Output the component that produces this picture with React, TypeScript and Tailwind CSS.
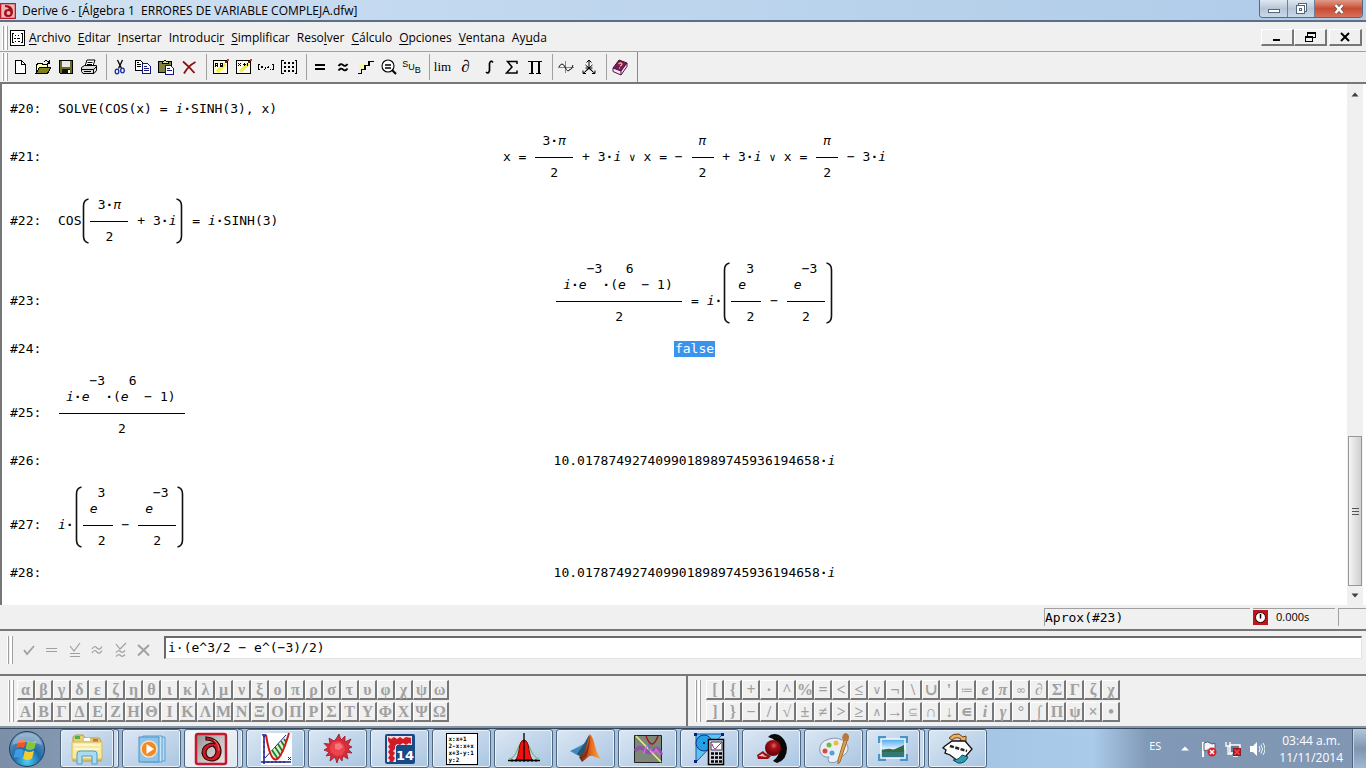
import React, { ReactNode } from "react";

const MONO = "font-['DejaVu_Sans_Mono','Liberation_Mono',monospace]";
const UI = "font-['Open_Sans','Noto_Sans',sans-serif]";

/* ---------- formula building blocks ---------- */

function I({ children }: { children: ReactNode }) {
  return <i className="italic">{children}</i>;
}

function Line({ children }: { children: ReactNode }) {
  return <span className="block h-4 whitespace-pre">{children}</span>;
}

/* Text that sits on the level of a fraction bar. */
function Axis({ children }: { children: ReactNode }) {
  return <span className="mb-4 block h-4 whitespace-pre">{children}</span>;
}

function Frac({ num, den, skew, width }: { num: ReactNode; den: ReactNode; skew?: boolean; width: string }) {
  return (
    <span className={`flex flex-col ${width}`}>
      <span className="px-2 text-center">{num}</span>
      <span className="flex h-4 items-center px-px">
        <span className="h-px flex-1 bg-black" />
      </span>
      <span className={skew ? "h-4 pr-2 text-right" : "h-4 text-center"}>{den}</span>
    </span>
  );
}

function Power({ base, exp }: { base: ReactNode; exp: string }) {
  return (
    <span className="flex items-end">
      <Line>{base}</Line>
      <span className="mb-4 block h-4">{exp}</span>
    </span>
  );
}

function Paren({ tall, right }: { tall?: boolean; right?: boolean }) {
  const h = tall ? 64 : 48;
  const d = right
    ? `M0.5 2 Q5.5 3 5.5 9 V${h - 9} Q5.5 ${h - 3} 0.5 ${h - 2}`
    : `M7.5 2 Q2.5 3 2.5 9 V${h - 9} Q2.5 ${h - 3} 7.5 ${h - 2}`;
  return (
    <svg width="8" height={h} viewBox={`0 0 8 ${h}`} fill="none" stroke="#111" strokeWidth="1.6" aria-hidden="true">
      <path d={d} />
    </svg>
  );
}

const i = <I>i</I>;
const e = <I>e</I>;
const pi = <I>π</I>;
const dot = <b className="font-bold">·</b>;
const or = <span className="text-[11px]">∨</span>;

const expProduct = (
  <Frac
    width="w-32"
    num={
      <span className="flex items-end">
        <Line>
          {i}
          {dot}
        </Line>
        <Power base={e} exp="−3" />
        <Line>{dot}(</Line>
        <Power base={e} exp="6" />
        <Line> − 1)</Line>
      </span>
    }
    den="2"
  />
);

const expDifference = (
  <>
    <Axis>
      {i}
      {dot}
    </Axis>
    <Paren tall />
    <Frac width="w-8" num={<Power base={e} exp="3" />} den="2" skew />
    <Axis> − </Axis>
    <Frac width="w-10" num={<Power base={e} exp="−3" />} den="2" />
    <Paren tall right />
  </>
);

const number = (
  <Line>
    10.0178749274099018989745936194658{dot}
    {i}
  </Line>
);

const steps: { n: number; center?: boolean; deep?: boolean; body: ReactNode }[] = [
  {
    n: 20,
    body: (
      <Line>
        SOLVE(COS(x) = {i}
        {dot}SINH(3), x)
      </Line>
    ),
  },
  {
    n: 21,
    center: true,
    deep: true,
    body: (
      <>
        <Axis>x = </Axis>
        <Frac width="w-10" num={<>3{dot}{pi}</>} den="2" />
        <Axis> + 3{dot}{i} {or} x = − </Axis>
        <Frac width="w-6" num={pi} den="2" />
        <Axis> + 3{dot}{i} {or} x = </Axis>
        <Frac width="w-6" num={pi} den="2" />
        <Axis> − 3{dot}{i}</Axis>
      </>
    ),
  },
  {
    n: 22,
    deep: true,
    body: (
      <>
        <Axis>COS</Axis>
        <Paren />
        <Frac width="w-10" num={<>3{dot}{pi}</>} den="2" />
        <Axis> + 3{dot}{i}</Axis>
        <Paren right />
        <Axis> = {i}{dot}SINH(3)</Axis>
      </>
    ),
  },
  {
    n: 23,
    center: true,
    deep: true,
    body: (
      <>
        {expProduct}
        <Axis> = </Axis>
        {expDifference}
      </>
    ),
  },
  { n: 24, center: true, body: <span className="block h-4 bg-[#3a94ee] px-px text-white">false</span> },
  { n: 25, deep: true, body: expProduct },
  { n: 26, center: true, body: number },
  { n: 27, deep: true, body: expDifference },
  { n: 28, center: true, body: number },
];

/* ---------- small chrome pieces ---------- */

function Grip({ className = "" }: { className?: string }) {
  return (
    <span className={`flex w-[6px] gap-px ${className}`}>
      <span className="w-[2px] border-r border-[#a0a0a0] bg-white" />
      <span className="w-[3px] border-r border-[#a0a0a0] bg-white" />
    </span>
  );
}

function Svg({ s = 18, children, crisp = true }: { s?: number; children: ReactNode; crisp?: boolean }) {
  return (
    <svg
      width={s}
      height={s}
      viewBox={`0 0 ${s} ${s}`}
      fill="none"
      shapeRendering={crisp ? "crispEdges" : "auto"}
      aria-hidden="true"
    >
      {children}
    </svg>
  );
}

const menus: [string, string, string][] = [
  ["", "A", "rchivo"],
  ["", "E", "ditar"],
  ["", "I", "nsertar"],
  ["Introduci", "r", ""],
  ["", "S", "implificar"],
  ["Reso", "l", "ver"],
  ["", "C", "álculo"],
  ["", "O", "pciones"],
  ["", "V", "entana"],
  ["Ay", "u", "da"],
];

const tools: { label: string; icon: ReactNode }[][] = [
  [
    {
      label: "Nuevo",
      icon: (
        <Svg>
          <path d="M4.5 2.5h6l4 4v9h-10z" fill="#fff" stroke="#000" />
          <path d="M10.5 2.5v4h4" stroke="#000" />
        </Svg>
      ),
    },
    {
      label: "Abrir",
      icon: (
        <Svg>
          <path d="M2 15V6h1.500l1-1h3l1 1h5v3" fill="#ffffb0" stroke="#000" />
          <path d="M2 15.500l3.500-6.500H17l-3.500 6.500z" fill="#808020" stroke="#000" />
          <path d="M10 3.500q3-2 5 1M15.500 2v3h-3" stroke="#000" />
        </Svg>
      ),
    },
    {
      label: "Guardar",
      icon: (
        <Svg>
          <path d="M2.500 2.500h13v13h-12l-1-1z" fill="#6d6d20" stroke="#000" />
          <path d="M5 3h8v6H5z" fill="#e8e8e8" />
          <path d="M5 11h8v4.500H5z" fill="#111" />
          <path d="M11 12h1.500v3H11z" fill="#fff" />
        </Svg>
      ),
    },
    {
      label: "Imprimir",
      icon: (
        <Svg crisp={false}>
          <path d="M5 8l2-6h8l-2 6" fill="#fff" stroke="#000" />
          <path d="M7.500 4.500h5M7 6.500h5" stroke="#000" />
          <path d="M1.500 9.500l3-2h12v5l-2.500 3h-11l-1.500-2z" fill="#ddd" stroke="#000" />
          <path d="M2 11.500h11.500l3-3M13.500 11.500v4M4 13.500h7" stroke="#000" />
        </Svg>
      ),
    },
  ],
  [
    {
      label: "Cortar",
      icon: (
        <Svg crisp={false}>
          <path d="M6.500 2l4 8.500M11.500 2l-4 8.500" stroke="#000" strokeWidth="1.300" />
          <ellipse cx="6" cy="13.500" rx="1.800" ry="2.300" stroke="#1a2e9e" strokeWidth="1.300" />
          <ellipse cx="11.500" cy="12.500" rx="1.800" ry="2.300" stroke="#1a2e9e" strokeWidth="1.300" />
        </Svg>
      ),
    },
    {
      label: "Copiar",
      icon: (
        <Svg>
          <path d="M1.500 2.500h5l3 3v7h-8z" fill="#fff" stroke="#000" />
          <path d="M3 6.500h4M3 8.500h4M3 4.500h2" stroke="#000" />
          <path d="M8.500 5.500h5l3 3v7h-8z" fill="#fff" stroke="#15157e" />
          <path d="M10 8.500h3M10 10.500h5M10 12.500h5" stroke="#15157e" />
        </Svg>
      ),
    },
    {
      label: "Pegar",
      icon: (
        <Svg>
          <path d="M1.500 3.500h13v11h-13z" fill="#808040" stroke="#000" />
          <path d="M5 5.500V3.500h1.500l1-1.500h1l1 1.500H11v2z" fill="#e8e880" stroke="#000" />
          <path d="M8.500 7.500h5l3 3v5.500h-8z" fill="#fff" stroke="#15157e" />
          <path d="M10 10.500h3M10 12.500h5" stroke="#15157e" />
        </Svg>
      ),
    },
    {
      label: "Eliminar",
      icon: (
        <Svg crisp={false}>
          <path d="M3 3.500q6 5 11.500 11.500M15.500 4Q8 8 4 15.500" stroke="#8b1212" strokeWidth="1.800" />
        </Svg>
      ),
    },
  ],
  [
    {
      label: "Insertar texto",
      icon: (
        <Svg>
          <path d="M2.500 2.500h14v13h-14z" fill="#fffde8" stroke="#000" />
          <path d="M6 14l8-8" stroke="#f0ee50" strokeWidth="3.500" />
          <path d="M4.500 9V5.500h2V9M4.500 7.500h2M9.500 9V5.500h2v1.500h-2h2v1.500h-2" stroke="#000" />
          <path d="M13.500 3h2v2h-2z" fill="#7a1f10" />
          <path d="M16 1h2v2h-2z" fill="#c8401c" />
        </Svg>
      ),
    },
    {
      label: "Insertar expresión",
      icon: (
        <Svg>
          <path d="M2.500 2.500h14v13h-14z" fill="#fffde8" stroke="#000" />
          <path d="M6 14l8-8" stroke="#f0ee50" strokeWidth="3.500" />
          <path d="M4 5l3 3M7 5L4 8M8.500 6.500h3M10 5v3M13.500 5v3" stroke="#000" />
          <path d="M13.500 3h2v2h-2z" fill="#7a1f10" />
          <path d="M16 1h2v2h-2z" fill="#c8401c" />
        </Svg>
      ),
    },
    {
      label: "Insertar vector",
      icon: (
        <Svg>
          <path d="M3 6.500H1.500v5H3M15 6.500h1.500v5H15M4 7.500v1.500M4 9.500h2M5.500 8v2M7.500 11v1M8.500 9v2M10 9.500h1.500M11.500 8v2M13.500 11v1" stroke="#000" />
        </Svg>
      ),
    },
    {
      label: "Insertar matriz",
      icon: (
        <Svg>
          <path d="M3.500 2.500h-2v13h2M14.500 2.500h2v13h-2" stroke="#000" />
          <path d="M4 5h2M8 5h2M12 5h2M4 9h2M8 9h2M12 9h2M4 13h2M8 13h2M12 13h2" stroke="#000" strokeWidth="2" />
        </Svg>
      ),
    },
  ],
  [
    {
      label: "Simplificar",
      icon: (
        <Svg>
          <path d="M4 7h10M4 11h10" stroke="#000" strokeWidth="2" />
        </Svg>
      ),
    },
    {
      label: "Aproximar",
      icon: (
        <Svg crisp={false}>
          <path d="M4.500 8q2-3 4.500-1t4.500-1M4.500 12.500q2-3 4.500-1t4.500-1" stroke="#000" strokeWidth="1.800" />
        </Svg>
      ),
    },
    {
      label: "Paso a paso",
      icon: (
        <Svg>
          <path d="M2 5h6v6H2z" fill="#f6f6a8" />
          <path d="M1 15.500h3.500v-4H8v-4h4v-4h5" stroke="#000" strokeWidth="1.500" />
        </Svg>
      ),
    },
    {
      label: "Evaluar",
      icon: (
        <Svg crisp={false}>
          <circle cx="8" cy="8" r="6" fill="#fff" stroke="#000" strokeWidth="1.100" />
          <path d="M5 7h6M5 10h6" stroke="#000" strokeWidth="1.700" />
          <path d="M12 12l4 4" stroke="#000" strokeWidth="2.200" />
        </Svg>
      ),
    },
    {
      label: "Sustituir",
      icon: (
        <span className="flex items-center font-['Liberation_Sans',sans-serif] text-[9px] leading-none">
          <span className="mb-[6px]">S</span>
          <span>U</span>
          <span className="mt-[6px]">B</span>
        </span>
      ),
    },
  ],
  [
    { label: "Límite", icon: <span className="font-['Liberation_Serif',serif] text-[13px]">lim</span> },
    { label: "Derivada", icon: <span className="font-['Liberation_Serif','DejaVu_Serif',serif] text-[17px] italic">∂</span> },
    {
      label: "Integral",
      icon: (
        <Svg crisp={false}>
          <path d="M13 4.500q-2.500-3-3.500 1v7q-1 4-3.500 1.500" stroke="#000" strokeWidth="1.700" />
        </Svg>
      ),
    },
    {
      label: "Sumatorio",
      icon: (
        <Svg crisp={false}>
          <path d="M14 6V3.500H4.500L9 9l-5.500 6H14V12.500" stroke="#000" strokeWidth="1.500" />
        </Svg>
      ),
    },
    {
      label: "Producto",
      icon: (
        <Svg>
          <path d="M2 3.500h14M3 15.500h5M10 15.500h5" stroke="#000" />
          <path d="M5.500 4v11M12.500 4v11" stroke="#000" strokeWidth="2" />
        </Svg>
      ),
    },
  ],
  [
    {
      label: "Ventana 2D",
      icon: (
        <Svg crisp={false}>
          <path d="M1 9.500h16M8.500 3v12" stroke="#888" />
          <path d="M2 9q3-6 6 0t4 3q3 0 4-5" stroke="#111" />
        </Svg>
      ),
    },
    {
      label: "Ventana 3D",
      icon: (
        <Svg crisp={false}>
          <path d="M9 2v9M6.500 4.500L9 2l2.500 2.500M9 10.500l-6 5M9 10.500l6 5M3 12.500v3h3M15 12.500v3h-3" stroke="#000" />
          <path d="M5.500 7l7 6M12.500 7l-7 6M5.500 10h7" stroke="#000" />
        </Svg>
      ),
    },
  ],
  [
    {
      label: "Ayuda",
      icon: (
        <Svg crisp={false}>
          <path d="M2 10L8 2l8 3-6 8z" fill="#7a1a5e" stroke="#4a0a3a" />
          <path d="M2 10v3.500l8 3.500v-4zM10 13l6-8v3.500L10 17" fill="#f0e8ee" stroke="#5c0f48" />
          <path d="M7.500 6q2-2 3.500 0 0 1.500-2 2M8 10h1" stroke="#f0b040" strokeWidth="1.300" />
        </Svg>
      ),
    },
  ],
];

/* ---------- symbol palettes ---------- */

const greek = ["αβγδεζηθικλμνξοπρστυφχψω", "ΑΒΓΔΕΖΗΘΙΚΛΜΝΞΟΠΡΣΤΥΦΧΨΩ"];
const symbols = ["[{+·^%=<≤∨¬\\∪'≔eπ∞∂ΣΓζχ", "]}−/√±≠>≥∧→⊆∩↓∊iγ°∫Πψ×•"];
const italics = "eiπγ";
const light = "∨∧⊆≔∞";

function keyFont(ch: string) {
  if (light.includes(ch)) return "font-['DejaVu_Sans',sans-serif] text-xs font-normal";
  if (italics.includes(ch)) return "font-['Liberation_Serif',serif] text-base font-bold italic";
  return "font-['Liberation_Serif','DejaVu_Serif',serif] text-base font-bold";
}

function Palette({ rows, label, upright }: { rows: string[]; label: string; upright?: boolean }) {
  return (
    <div role="group" aria-label={label} className="flex flex-col gap-[2px]">
      {rows.map((row) => (
        <div key={row} className="flex">
          {Array.from(row).map((ch) => (
            <button
              key={ch}
              type="button"
              className={`flex h-5 w-[18px] items-center justify-center border-t border-r-2 border-b-2 border-l border-t-white border-r-[#777] border-b-[#777] border-l-white bg-[#f0f0f0] text-[#a0a0a0] ${upright ? "font-['Liberation_Serif','DejaVu_Serif',serif] text-base font-bold" : keyFont(ch)}`}
            >
              <span className="leading-none">{ch}</span>
            </button>
          ))}
        </div>
      ))}
    </div>
  );
}

const entryTools: { label: string; icon: ReactNode }[] = [
  { label: "Introducir", icon: <path d="M4 9l3 4 7-8" strokeWidth="1.800" /> },
  { label: "Simplificar", icon: <path d="M3 7.500h11M3 10.500h11" strokeWidth="1.200" /> },
  { label: "Introducir y simplificar", icon: <path d="M4 5l4 5 6-8M4 12.500h10M4 15.500h10" strokeWidth="1.200" /> },
  { label: "Aproximar", icon: <path d="M3 8q2.500-4 5-1t5-1.500M3 12q2.500-4 5-1t5-1.500" strokeWidth="1.200" /> },
  { label: "Introducir y aproximar", icon: <path d="M4 3l4 5 6-6M4 11.500q2.500-3 4.500-1t4.500-1M4 15.500q2.500-3 4.500-1t4.500-1" strokeWidth="1.200" /> },
  { label: "Cancelar", icon: <path d="M3 4q6 5 11 10.500M14 4L3 14.500" strokeWidth="1.900" /> },
];

/* ---------- taskbar ---------- */

function Pic({ children }: { children: ReactNode }) {
  return (
    <svg width="34" height="34" viewBox="0 0 34 34" fill="none" aria-hidden="true">
      {children}
    </svg>
  );
}

const apps: { label: string; stack?: boolean; active?: boolean; icon: ReactNode }[] = [
  {
    label: "Explorador de Windows",
    stack: true,
    icon: (
      <Pic>
        <path d="M3 5l3-2h7l2 3h14l2 3v20H3z" fill="#e6cf70" stroke="#b99a3c" />
        <path d="M5 4h5v3H5z" fill="#4fae4a" />
        <path d="M14 6h6v3h-6z" fill="#fff" />
        <path d="M23 7h5v3h-5z" fill="#d96a4a" />
        <path d="M2 10h30v17H2z" fill="#f6e9a0" stroke="#d3ba5e" />
        <path d="M4 13h26M4 17h26" stroke="#fdf6cc" strokeWidth="2" />
        <path d="M7 32V22q0-3 3-3h14q3 0 3 3v10h-5v-8h-10v8z" fill="#a9dcf3" stroke="#4f9ecb" />
      </Pic>
    ),
  },
  {
    label: "Windows Media Player",
    icon: (
      <Pic>
        <path d="M12 5h18v24H12z" fill="#b4dbf3" stroke="#5a9fd0" />
        <path d="M8 4h19v26H8z" fill="#c8e6f8" stroke="#5a9fd0" />
        <path d="M4 5h20v25H4z" fill="#8cc4ea" stroke="#4b93c8" />
        <circle cx="14" cy="17" r="8" fill="#f08a24" stroke="#fbe0c0" strokeWidth="1.500" />
        <path d="M11.500 12v10l7.500-5z" fill="#fff" />
      </Pic>
    ),
  },
  {
    label: "Derive 6",
    stack: true,
    active: true,
    icon: (
      <Pic>
        <defs>
          <linearGradient id="dv" x1="0" y1="0" x2="1" y2="1">
            <stop offset="0" stopColor="#8f8f8f" />
            <stop offset="0.500" stopColor="#c4c0c0" />
            <stop offset="1" stopColor="#e8e4e4" />
          </linearGradient>
        </defs>
        <rect x="2" y="2" width="30" height="30" rx="2" fill="url(#dv)" stroke="#c4182c" strokeWidth="2.500" />
        <path
          fillRule="evenodd"
          d="M12 5Q25 6 27 18q0 11-10 11-8-1-9-8 0-8 9-10 3 0 4 1-2-4-9-4zM19 14q-6 1-7 6 0 5 4 6 5-1 6-6 0-4-3-6z"
          fill="#cf1a24"
          stroke="#2c0508"
          strokeWidth="1.200"
        />
        <path d="M20 8q5 4 5 11" stroke="#f07070" />
      </Pic>
    ),
  },
  {
    label: "Geometría",
    icon: (
      <Pic>
        <path d="M2 1h31v32H2z" fill="#fff" />
        <path d="M5 2v30M2 30h30" stroke="#1a1a8c" strokeWidth="1.500" />
        <path d="M6 26L27 3" stroke="#1a1a8c" />
        <path d="M11 20L29 4l-8 22-4 3-4-3z" fill="#d8f0d0" />
        <path d="M13 18l6 9M16 15l6 9M19 12l5 8M22 9l4 6M25 7l2 3" stroke="#1d7a28" strokeWidth="1.700" />
        <path d="M7 3q8 50 23-2" stroke="#d01818" strokeWidth="2" />
        <path d="M3 2l2 3 2-3M29 25l3 3m0-3l-3 3" stroke="#1a1a8c" />
        <path d="M9 29v2M13 29v2M17 29v2M21 29v2M25 29v2M4 25h2M4 20h2M4 15h2M4 10h2" stroke="#1a1a8c" />
      </Pic>
    ),
  },
  {
    label: "Estrella",
    icon: (
      <Pic>
        <path
          d="M18 2l2 6 4-4v6l6-3-3 6 4 2-4 2 4 4-5.500-.5L27 27l-5-3-1 5-3-4-2 6-2-6-5 4 1-6-5 1 3-4-5-2 4-2.500-4-4 6 .5-1-6 5 3 2-2z"
          fill="#d92c38"
          stroke="#941c28"
          strokeWidth="0.800"
        />
        <path d="M12 10l6-1 5 4 1 5-3 5-6 1-5-4-1-5z" fill="#ea444e" />
        <path d="M14 12l5-1 3 4-4 3-4-1z" fill="#f4787a" />
      </Pic>
    ),
  },
  {
    label: "Aplicación 14",
    icon: (
      <Pic>
        <rect x="2" y="2" width="30" height="30" rx="2" fill="#174a86" />
        <path d="M4 4h25v9H14v17H4z" fill="#f3dede" />
        <path
          d="M5 5l3 2 3-2 3 2 3-2 3 2 3-2 5 1v6l-2-1-3 2-3-2-3 2-3-1-2 2v3l-2 2 2 2-2 3 2 2-2 4H6l1-2-2-2 2-3-2-3 2-3-2-2 2-3-2-3z"
          fill="#cf1c28"
        />
        <path d="M13 14h18v17H13z" fill="#174a86" />
        <text x="13" y="28" fontFamily="DejaVu Sans" fontWeight="bold" fontSize="13" fill="#fff">
          14
        </text>
      </Pic>
    ),
  },
  {
    label: "Ecuaciones",
    icon: (
      <span className="block h-8 w-8 border border-black bg-white pt-px pl-[2px] text-left font-['DejaVu_Sans_Mono',monospace] text-[6px] leading-[7px] font-bold whitespace-pre text-black">
        {"x:x+1\n2-x:x+x\nx+3-y:1\ny:2"}
      </span>
    ),
  },
  {
    label: "Distribución",
    icon: (
      <Pic>
        <path d="M2 27Q8 26 11 16q6-14 12 0 3 9 9 11" stroke="#5bb548" />
        <path d="M9 28q2-4 3-10 1-10 5-10t5 10q1 6 3 10z" fill="#f01010" stroke="#7a0a0a" />
        <path d="M17 1v29M1 28.500h32" stroke="#000" strokeWidth="1.300" />
        <path d="M5 27v3M9 27v3M13 27v3M21 27v3M25 27v3M29 27v3" stroke="#000" />
      </Pic>
    ),
  },
  {
    label: "MATLAB",
    icon: (
      <Pic>
        <defs>
          <linearGradient id="ml" x1="0" x2="1" y1="0" y2="0">
            <stop offset="0" stopColor="#5c1c10" />
            <stop offset="0.550" stopColor="#e86a1c" />
            <stop offset="1" stopColor="#f7b254" />
          </linearGradient>
        </defs>
        <path d="M1 19l10-5 5-3 3 4-7 10-4-2z" fill="#3f88bc" />
        <path d="M8 22l7-10 5-9 2 10-9 12z" fill="#27566f" />
        <path d="M13 30l-3-5q5-2 7-10 2-8 4-13 3 3 5 12 2 8 6 13l-6-2q-5-3-8 1z" fill="url(#ml)" />
        <path d="M21 2q-1 13-8 24l4-1q4-9 4-23z" fill="#8c2c14" />
      </Pic>
    ),
  },
  {
    label: "Graficador",
    icon: (
      <Pic>
        <path d="M3.500 3.500h27v27h-27z" fill="#7d8878" stroke="#222" />
        <path d="M4 19q5-6 10-1t9 0 7 5" stroke="#8d56a8" strokeWidth="4" />
        <path d="M5 4l25 26" stroke="#eef07c" strokeWidth="1.500" />
        <path d="M15 4q6 16 12 0" stroke="#a01c1c" strokeWidth="1.500" />
        <path d="M13 22q2-12 6-5t6 0l4 6" stroke="#d46ae0" strokeWidth="1.500" />
        <path d="M18 12v8M24 11l-6 6" stroke="#3a7a9a" />
      </Pic>
    ),
  },
  {
    label: "Calculadora geométrica",
    icon: (
      <Pic>
        <path d="M3 2h27L3 30z" fill="#5cc4f0" stroke="#1a5aa8" />
        <circle cx="11" cy="11" r="8" fill="#25a0e4" stroke="#123a90" />
        <path d="M1 1h3v3H1zM28 1h3v3h-3zM1 28h3v3H1zM10 10h2v2h-2z" fill="#0c1e80" />
        <path d="M15.500 7.500h15v25h-15z" fill="#d8d8e4" stroke="#000" strokeWidth="1.500" />
        <path d="M18 10h11v8H18z" fill="#fff" stroke="#334" />
        <path d="M19 12q3 8 5 3l4-4" stroke="#a02090" />
        <path d="M18 21.500h11M18 25.500h11M18 29.500h11" stroke="#000" strokeWidth="2.600" strokeDasharray="3 1" />
      </Pic>
    ),
  },
  {
    label: "Esfera",
    icon: (
      <Pic>
        <defs>
          <radialGradient id="sph" cx="0.550" cy="0.350" r="0.600">
            <stop offset="0" stopColor="#e06868" />
            <stop offset="0.350" stopColor="#a81018" />
            <stop offset="1" stopColor="#680008" />
          </radialGradient>
        </defs>
        <path d="M13 5q4-5 11-2 7 4 8 13 0 12-10 15l-4-2q7-5 6-13-2-9-11-11z" fill="#080808" />
        <circle cx="18" cy="16" r="8" fill="url(#sph)" />
        <path d="M2 23l6-4 2 2 6 3-3 3H3z" fill="#9c0c14" />
        <path d="M3.500 24l4-2.500 2 2 3 1.500z" fill="#f6c4c4" />
      </Pic>
    ),
  },
  {
    label: "Paint",
    icon: (
      <Pic>
        <path d="M3 20Q1 10 12 7q10-3 17 4 5 7-2 12-4 2-6 5-3 4-9 2-2-3 0-5-6 1-9-5z" fill="#e8eef4" stroke="#8498ac" />
        <circle cx="8" cy="19" r="2.500" fill="#d84a3c" />
        <circle cx="12" cy="13" r="2.500" fill="#70b848" />
        <circle cx="19" cy="11" r="2.500" fill="#e8c040" />
        <circle cx="15" cy="21" r="2.500" fill="#58a0d8" />
        <path d="M27 8l3 1-7 21-2 2v-4z" fill="#e0a050" stroke="#a06a28" />
        <path d="M25 6q1-5 4-5 5 2 2 8h-4z" fill="#b87840" />
      </Pic>
    ),
  },
  {
    label: "Visor de fotos",
    stack: true,
    icon: (
      <Pic>
        <defs>
          <linearGradient id="sky" x1="0" x2="0" y1="0" y2="1">
            <stop offset="0" stopColor="#4aa8ee" />
            <stop offset="0.500" stopColor="#d8eefc" />
            <stop offset="0.600" stopColor="#3a7858" />
            <stop offset="1" stopColor="#2c7898" />
          </linearGradient>
        </defs>
        <path d="M2 4h8v7H2zM24 4h8v7h-8zM2 22h8v7H2zM24 22h8v7h-8z" fill="#4c94c8" />
        <path d="M5 7h24v19H5z" fill="url(#sky)" stroke="#f4fafe" strokeWidth="1.500" />
        <path d="M6 19q6-4 11-1l11-5v7H6z" fill="#346848" />
      </Pic>
    ),
  },
  {
    label: "Utilidad",
    icon: (
      <Pic>
        <path d="M8 6q4-5 10-4l4 3 3-1v6l-6-1 1-2q-5-3-9 1z" fill="#f0b060" stroke="#6a4018" />
        <path d="M4 14l7-5h13l7 8-6 7-8 5-8-6-5-2 1-3-3-2z" fill="#fdfdfd" stroke="#111" strokeWidth="1.300" />
        <path d="M9 14l17 5" stroke="#222" strokeWidth="2.500" strokeDasharray="4 1.500" />
        <path d="M12 28q6 0 9-5l6 2q-3 7-10 6z" fill="#2c9cb0" stroke="#0c4c5c" />
      </Pic>
    ),
  },
];

function TaskButton({ app }: { app: (typeof apps)[number] }) {
  const face = app.active
    ? "border-[#51657d] bg-linear-to-br from-[#f4f6fa] to-[#dfe6ef]"
    : "border-[#51657d] bg-linear-to-br from-[#dbe7f4] via-[#c2d6ea] to-[#aac6e2]";
  return (
    <div className="flex h-[39px] w-[59px]">
      <button
        type="button"
        aria-label={app.label}
        className={`flex min-w-0 flex-1 items-center justify-center rounded-[3px] border shadow-[inset_0_0_0_1px_#e8f1fa] ${face}`}
      >
        {app.icon}
      </button>
      {app.stack && (
        <span className="w-[5px] rounded-r-[3px] border-y border-r border-[#51657d] bg-[#c8daec] shadow-[inset_-1px_0_0_#eef5fb]" />
      )}
    </div>
  );
}

/* ---------- window ---------- */

function DeriveMark() {
  return (
    <svg width="16" height="16" viewBox="0 0 16 16" aria-hidden="true">
      <rect x="0.500" y="0.500" width="15" height="15" rx="1" fill="#e8b8b8" stroke="#b81828" strokeWidth="1.500" />
      <path
        fillRule="evenodd"
        d="M5 2q8 0 8 7 0 5-5 5-4 0-4-4t5-4q-1-2-4-2zM8.500 8Q6.500 8 6.500 10t2 2 2-2-2-2z"
        fill="#a80c18"
      />
    </svg>
  );
}

const mdiButtons = [
  { label: "Minimizar documento", icon: <path d="M5 12h7" stroke="#000" strokeWidth="2" /> },
  {
    label: "Restaurar documento",
    icon: <path d="M6.500 8V4.500h8v5H12M6 5.500h9M4.500 8.500h7v5h-7zM4 9.500h8" stroke="#000" />,
  },
  {
    label: "Cerrar documento",
    icon: <path d="M5 5l8 8M13 5l-8 8" stroke="#000" strokeWidth="2" shapeRendering="auto" />,
  },
];

export default function App() {
  return (
    <div className={`min-h-screen bg-white pr-[6px] pb-2 text-black ${UI}`}>
      <div className="flex min-h-[calc(100vh-8px)] flex-col bg-[#f0f0f0]">
        <header className="flex h-[22px] items-start justify-between border-b-2 border-[#5b6f88] bg-linear-to-r from-[#d3e2f2] via-[#c3d9ef] via-30% to-[#aecbe8]">
          <div className="flex items-center gap-[6px] pt-[2px]">
            <DeriveMark />
            <h1 className="text-xs leading-[18px] whitespace-pre">Derive 6 - [Álgebra 1  ERRORES DE VARIABLE COMPLEJA.dfw]</h1>
          </div>
          <div className="mr-[3px] flex h-[18px] overflow-hidden rounded-b-[4px] border border-t-0 border-[#56697f]">
            <button
              type="button"
              aria-label="Minimizar"
              className="flex w-7 items-center justify-center border-r border-[#6d8098] bg-linear-to-b from-[#dfe8f2] via-[#b7c6d7] to-[#c8d8ea]"
            >
              <Svg s={14}>
                <path d="M1.500 7.500h11v3h-11z" fill="#fff" stroke="#55657a" />
              </Svg>
            </button>
            <button
              type="button"
              aria-label="Restaurar"
              className="flex w-[27px] items-center justify-center border-r border-[#6d8098] bg-linear-to-b from-[#dfe8f2] via-[#b7c6d7] to-[#c8d8ea]"
            >
              <Svg s={14}>
                <path d="M4.500 1.500h8v8h-8z" fill="#fff" stroke="#55657a" />
                <path d="M2.500 3.500h8v8h-8z" fill="#fff" stroke="#55657a" />
                <path d="M5.500 6.500h2v2h-2z" stroke="#55657a" />
              </Svg>
            </button>
            <button
              type="button"
              aria-label="Cerrar"
              className="flex w-[47px] items-center justify-center bg-linear-to-b from-[#e09a88] via-[#c84c34] to-[#d8705a]"
            >
              <Svg s={14} crisp={false}>
                <path d="M3.500 3l7 8M10.500 3l-7 8" stroke="#6e5050" strokeWidth="4" />
                <path d="M3.500 3l7 8M10.500 3l-7 8" stroke="#fff" strokeWidth="2.500" />
              </Svg>
            </button>
          </div>
        </header>

        <nav className="flex h-[30px] items-center border-b border-[#a0a0a0] pt-[2px] pl-[2px]" aria-label="Menú">
          <Grip className="h-6" />
          <Svg>
            <path d="M2 1.500h14.500v15H2z" fill="#fff" stroke="#000" />
            <path d="M5.500 4.500h-1.500v9h2M13 4.500h1.500v9h-2M7 6.500h1M9.500 6.500h1.500M6 9h2M9 9h3M7 12h1M10 12h1.500" stroke="#000" />
          </Svg>
          <ul className="flex flex-1 gap-[7px] pl-[3px] text-xs">
            {menus.map(([a, b, c]) => (
              <li key={a + b + c}>
                <button type="button">
                  {a}
                  <u className="underline-offset-2">{b}</u>
                  {c}
                </button>
              </li>
            ))}
          </ul>
          <div className="flex pr-1">
            {mdiButtons.map((b, k) => (
              <button
                key={b.label}
                type="button"
                aria-label={b.label}
                className={`flex h-[17px] w-[33px] items-center justify-center border-t border-r-2 border-b-2 border-l border-t-white border-r-[#777] border-b-[#777] border-l-white ${k === 2 ? "ml-[2px]" : ""}`}
              >
                <Svg>{b.icon}</Svg>
              </button>
            ))}
          </div>
        </nav>

        <div className="flex h-8 items-stretch border-b-2 border-[#777]">
          <div className="flex items-center border-r border-[#888] pr-[6px] pl-[2px]" role="toolbar" aria-label="Herramientas">
            <Grip className="h-7" />
            {tools.map((group, g) => (
              <div key={g} className="flex items-center">
                {g > 0 && <span className="mr-px ml-[6px] h-[26px] w-px bg-[#a0a0a0]" />}
                {group.map((t) => (
                  <button key={t.label} type="button" aria-label={t.label} className="flex h-6 w-[23px] items-center justify-center">
                    {t.icon}
                  </button>
                ))}
              </div>
            ))}
          </div>
        </div>

        <main className="flex flex-1 border-l-2 border-[#777] bg-white pr-[3px]">
          <ol className={`flex flex-1 flex-col gap-4 pt-[17px] pr-4 pb-6 pl-2 text-[13px] leading-4 ${MONO}`}>
            {steps.map((s) => (
              <li key={s.n} className="flex items-end">
                <span className={`w-12 ${s.deep ? "mb-4" : ""}`}>#{s.n}:</span>
                <div className={`flex flex-1 items-end ${s.center ? "justify-center" : ""}`}>{s.body}</div>
              </li>
            ))}
          </ol>
          <div className="flex w-4 flex-col items-center justify-between bg-[#f0f0f0] py-1">
            <button type="button" aria-label="Subir" className="flex h-3 items-center">
              <svg width="8" height="5" viewBox="0 0 8 5" aria-hidden="true">
                <path d="M0.500 4.500L4 0.500l3.500 4z" fill="#404040" />
              </svg>
            </button>
            <div className="mt-auto mb-[3px] flex h-[150px] w-[14px] flex-col items-center justify-center gap-[2px] border border-[#989898] bg-linear-to-r from-[#f4f4f4] to-[#cfcfcf]">
              <span className="h-px w-[7px] bg-[#555]" />
              <span className="h-px w-[7px] bg-[#555]" />
              <span className="h-px w-[7px] bg-[#555]" />
            </div>
            <button type="button" aria-label="Bajar" className="flex h-3 items-center">
              <svg width="8" height="5" viewBox="0 0 8 5" aria-hidden="true">
                <path d="M0.500 0.500L4 4.500l3.500-4z" fill="#404040" />
              </svg>
            </button>
          </div>
        </main>

        <div className="flex h-[26px] items-start justify-end gap-[3px] border-b-2 border-[#777] pt-[3px]">
          <div className={`h-[18px] w-[206px] border-t border-l border-[#a0a0a0] text-[13px] leading-[18px] ${MONO}`}>Aprox(#23)</div>
          <div className="flex h-[18px] w-[82px] items-center gap-2 border-t border-[#a0a0a0] text-[11px]">
            <svg width="15" height="15" viewBox="0 0 15 15" aria-hidden="true">
              <path d="M0 0h15v15H0z" fill="#c0141c" />
              <circle cx="7.500" cy="7.500" r="5" fill="#fff" stroke="#300" />
              <path d="M7.500 4v4.500" stroke="#000" strokeWidth="1.500" />
            </svg>
            <span>0.000s</span>
          </div>
          <div className="h-[18px] w-7 border-t border-l border-[#a0a0a0]" />
        </div>

        <div className="flex h-[45px] items-start border-b-2 border-[#777] pt-[5px] pr-1 pl-[7px]">
          <Grip className="mr-1 h-7" />
          <div className="mr-[9px] flex pt-1">
            {entryTools.map((t) => (
              <button key={t.label} type="button" aria-label={t.label} className="flex h-5 w-[23px] items-center justify-center">
                <svg width="18" height="18" viewBox="0 0 18 18" fill="none" stroke="#a0a0a0" aria-hidden="true">
                  {t.icon}
                </svg>
              </button>
            ))}
          </div>
          <input
            aria-label="Expresión"
            defaultValue="i·(e^3/2 − e^(−3)/2)"
            className={`h-[23px] min-w-0 flex-1 border-t-2 border-r border-b border-l-2 border-t-[#696969] border-r-[#e3e3e3] border-b-[#e3e3e3] border-l-[#696969] bg-white pb-[2px] pl-[2px] text-[13px] leading-4 outline-none ${MONO}`}
          />
        </div>

        <div className="flex h-[52px] border-b-2 border-[#8a95a3]">
          <div className="flex flex-[687_1_0%] gap-[3px] border-r-2 border-[#777] pt-1 pl-2">
            <Grip className="h-[42px]" />
            <Palette rows={greek} label="Letras griegas" upright />
          </div>
          <div className="flex flex-[679_1_0%] gap-[5px] pt-1 pl-[7px]">
            <Grip className="h-[42px]" />
            <Palette rows={symbols} label="Símbolos matemáticos" />
          </div>
        </div>

        <footer className="flex h-10 items-center border-t border-[#33475f] bg-[linear-gradient(to_right,#7b8fa9_0%,#8598b2_5%,#a3c0df_10%,#a3c4e4_70%,#abcbea_80%,#8099b6_84%,#8196b2_100%)]">
          <button type="button" aria-label="Inicio" className="flex w-[60px] items-center justify-start pl-2">
            <svg width="38" height="38" viewBox="0 0 38 38" aria-hidden="true">
              <defs>
                <radialGradient id="orb" cx="0.500" cy="0.850" r="0.850">
                  <stop offset="0" stopColor="#4fd0f4" />
                  <stop offset="0.450" stopColor="#1c6ca8" />
                  <stop offset="1" stopColor="#7a9cc0" />
                </radialGradient>
              </defs>
              <circle cx="19" cy="19" r="17.500" fill="url(#orb)" stroke="#203f60" />
              <path d="M10 11q4-3 8-1l-2 8q-4-2-8 0z" fill="#e8582c" />
              <path d="M19.500 10.500q4 3 9 0l-2 8q-5 3-9 0z" fill="#84c440" />
              <path d="M7.500 20q4-2 8 0l-2 8q-4-2-8 0z" fill="#3f9ce4" />
              <path d="M17 20.500q4 3 9 0l-2 8q-5 3-9 0z" fill="#f8cc30" />
              <path d="M4 15q3-12 15-12t15 12q-15-6-30 0z" fill="#fff" fillOpacity="0.300" />
            </svg>
          </button>
          <div className="flex gap-[3px]">
            {apps.map((a) => (
              <TaskButton key={a.label} app={a} />
            ))}
          </div>
          <div className="ml-auto flex h-full items-center text-xs text-white">
            <span className="mr-5 mb-[5px] text-[11px]">ES</span>
            <div className="mr-[14px] flex items-center gap-2">
              <button type="button" aria-label="Mostrar iconos ocultos" className="mr-1">
                <svg width="8" height="5" viewBox="0 0 8 5" aria-hidden="true">
                  <path d="M0 4.500L4 0.500l4 4z" fill="#fff" />
                </svg>
              </button>
              <svg width="16" height="18" viewBox="0 0 16 18" fill="none" role="img" aria-label="Centro de actividades">
                <path d="M2 17V2" stroke="#fff" strokeWidth="2" />
                <path d="M3 3q4-2 6 0t5 0v8q-3 2-5 0t-6 0z" fill="#f4f6f8" stroke="#50617a" />
                <circle cx="11" cy="12" r="4.500" fill="#d8242c" />
                <path d="M9 10l4 4M13 10l-4 4" stroke="#fff" strokeWidth="1.500" />
              </svg>
              <svg width="16" height="18" viewBox="0 0 16 18" fill="none" role="img" aria-label="Red">
                <path d="M5 5h10v8H5z" fill="#66788e" stroke="#fff" strokeWidth="1.500" />
                <path d="M1 2v4h4V2M3 6v8h4M8 16h5" stroke="#fff" strokeWidth="1.300" />
                <path d="M8 8h8v8H8z" fill="#9c1820" />
                <path d="M9.500 9.500l5 5M14.500 9.500l-5 5" stroke="#e84848" strokeWidth="1.700" />
              </svg>
              <svg width="16" height="18" viewBox="0 0 16 18" fill="none" role="img" aria-label="Volumen">
                <path d="M1 6h3l4-4v14l-4-4H1z" fill="#fff" />
                <path d="M10 6q2 3 0 6M12 4.500q3 4.500 0 9M14 3q4 6 0 12" stroke="#eef3f8" />
              </svg>
            </div>
            <time className="mr-[9px] text-center leading-[17px]">
              03:44 a.m.
              <br />
              11/11/2014
            </time>
            <button
              type="button"
              aria-label="Mostrar escritorio"
              className="h-full w-[14px] border-l border-[#4c6480] bg-linear-to-b from-[#b4c6da] via-[#7f95b0] to-[#a0b8d2] shadow-[inset_1px_0_0_#c4d4e6]"
            />
          </div>
        </footer>
      </div>
    </div>
  );
}
